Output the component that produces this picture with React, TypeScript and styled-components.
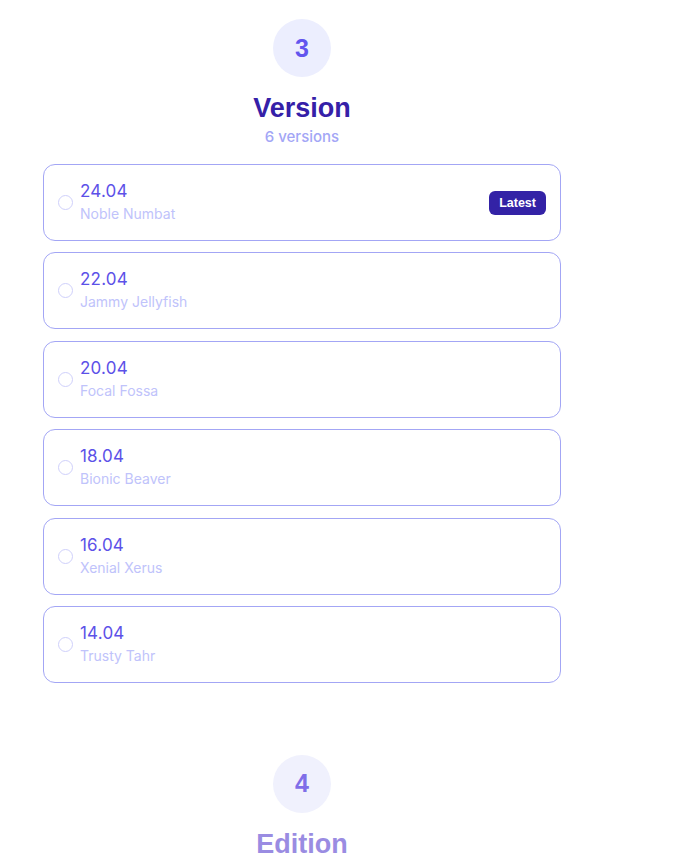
import React, { FC } from "react";
import styled, { createGlobalStyle } from "styled-components";

interface Version {
  number: string;
  name: string;
  latest?: boolean;
}

const versions: Version[] = [
  { number: "24.04", name: "Noble Numbat", latest: true },
  { number: "22.04", name: "Jammy Jellyfish" },
  { number: "20.04", name: "Focal Fossa" },
  { number: "18.04", name: "Bionic Beaver" },
  { number: "16.04", name: "Xenial Xerus" },
  { number: "14.04", name: "Trusty Tahr" },
];

const App: FC = () => {
  return (
    <>
      <GlobalStyle />
      <Page>
        <Step>
          <StepBadge>3</StepBadge>
          <StepTitle>Version</StepTitle>
          <StepSub>6 versions</StepSub>
        </Step>

        <List>
          {versions.map((v) => (
            <Card key={v.number}>
              <Radio />
              <Info>
                <VersionNumber>{v.number}</VersionNumber>
                <VersionName>{v.name}</VersionName>
              </Info>
              {v.latest && <Tag>Latest</Tag>}
            </Card>
          ))}
        </List>

        <Step $faded>
          <StepBadge $faded>4</StepBadge>
          <StepTitle $faded>Edition</StepTitle>
        </Step>
      </Page>
    </>
  );
};

export default App;

const GlobalStyle = createGlobalStyle`
  body {
    margin: 0;
    background: #ffffff;
    font-family: Inter, "Liberation Sans", Arial, sans-serif;
  }
`;

const Page = styled.div`
  width: 518px;
  margin-left: 43px;
  padding-top: 19px;
  display: flex;
  flex-direction: column;
`;

const Step = styled.div<{ $faded?: boolean }>`
  display: flex;
  flex-direction: column;
  align-items: center;
  margin-top: ${(p) => (p.$faded ? "72px" : "0")};
`;

const StepBadge = styled.div<{ $faded?: boolean }>`
  width: 58px;
  height: 58px;
  border-radius: 50%;
  background: ${(p) => (p.$faded ? "#f0f1fd" : "#eceefe")};
  color: ${(p) => (p.$faded ? "#7f6ee8" : "#6255ee")};
  display: flex;
  align-items: center;
  justify-content: center;
  font-family: "Liberation Sans", Arial, sans-serif;
  font-weight: 700;
  font-size: 25px;
`;

const StepTitle = styled.h2<{ $faded?: boolean }>`
  margin: 15px 0 0;
  font-family: "Liberation Sans", Arial, sans-serif;
  font-weight: 700;
  font-size: 27px;
  line-height: 32px;
  color: ${(p) => (p.$faded ? "#9a8ce2" : "#3520a8")};
`;

const StepSub = styled.div`
  margin-top: 3px;
  font-family: Inter, "Liberation Sans", Arial, sans-serif;
  font-weight: 500;
  font-size: 15px;
  line-height: 20px;
  color: #a3a6f6;
`;

const List = styled.div`
  margin-top: 17px;
  display: flex;
  flex-direction: column;
  gap: 11.4px;
`;

const Card = styled.div`
  box-sizing: border-box;
  height: 77px;
  border: 1px solid #a3a6f5;
  border-radius: 12px;
  padding: 0 14px 0 14px;
  display: flex;
  align-items: center;
  background: #ffffff;
`;

const Radio = styled.span`
  box-sizing: border-box;
  width: 15px;
  height: 15px;
  border: 1px solid #cfd0fb;
  border-radius: 50%;
  flex-shrink: 0;
`;

const Info = styled.div`
  flex: 1;
  margin-left: 7px;
  display: flex;
  flex-direction: column;
  margin-top: -1px;
`;

const VersionNumber = styled.div`
  font-size: 17px;
  line-height: 22px;
  color: #5c51e8;
  letter-spacing: 0.2px;
`;

const VersionName = styled.div`
  margin-top: 2px;
  font-size: 14px;
  line-height: 20px;
  color: #c0c3fb;
`;

const Tag = styled.span`
  background: #3322a6;
  color: #ffffff;
  font-family: "Liberation Sans", Arial, sans-serif;
  font-weight: 700;
  font-size: 12.5px;
  line-height: 24px;
  padding: 0 10px;
  border-radius: 6px;
`;
